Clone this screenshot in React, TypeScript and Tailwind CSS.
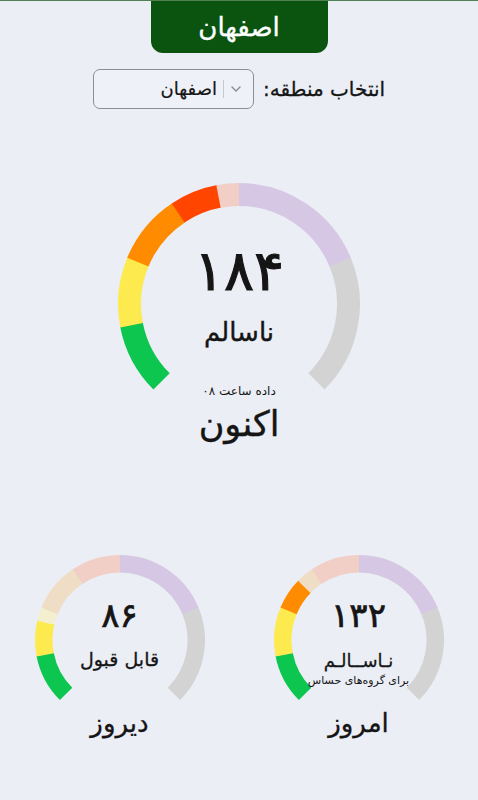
import React from "react";

type Seg = { min: number; max: number; units: number; full: string; faded: string };

const SEGS: Seg[] = [
  { min: 0, max: 50, units: 1, full: "#0cc64f", faded: "#cfeed8" },
  { min: 50, max: 100, units: 1, full: "#fdea4f", faded: "#f3efcf" },
  { min: 100, max: 150, units: 1, full: "#ff8c00", faded: "#f0ddc6" },
  { min: 150, max: 200, units: 1, full: "#ff4500", faded: "#f1cfc7" },
  { min: 200, max: 300, units: 2, full: "#8f3f97", faded: "#d6c8e4" },
  { min: 300, max: 500, units: 2, full: "#7e0023", faded: "#d3d3d3" },
];

function arcPath(cx: number, cy: number, r: number, a1: number, a2: number) {
  const rad = (d: number) => (d * Math.PI) / 180;
  const x1 = cx + r * Math.cos(rad(a1));
  const y1 = cy + r * Math.sin(rad(a1));
  const x2 = cx + r * Math.cos(rad(a2));
  const y2 = cy + r * Math.sin(rad(a2));
  const large = a2 - a1 > 180 ? 1 : 0;
  return `M ${x1.toFixed(2)} ${y1.toFixed(2)} A ${r} ${r} 0 ${large} 1 ${x2.toFixed(2)} ${y2.toFixed(2)}`;
}

function GaugeArc({
  value,
  outer,
  stroke,
  width,
  height,
}: {
  value: number;
  outer: number;
  stroke: number;
  width: number;
  height: number;
}) {
  const cx = width / 2;
  const cy = width / 2;
  const r = outer - stroke / 2;
  const unit = 270 / 8;
  const parts: { a1: number; a2: number; color: string }[] = [];
  let a = 135;
  for (const s of SEGS) {
    const start = a;
    const end = a + s.units * unit;
    if (value >= s.max) {
      parts.push({ a1: start, a2: end, color: s.full });
    } else if (value >= s.min) {
      const mid = start + ((value - s.min) / (s.max - s.min)) * (end - start);
      parts.push({ a1: start, a2: mid, color: s.full });
      parts.push({ a1: mid, a2: end, color: s.faded });
    } else {
      parts.push({ a1: start, a2: end, color: s.faded });
    }
    a = end;
  }
  return (
    <svg width={width} height={height} viewBox={`0 0 ${width} ${height}`}>
      {parts.map((p, i) => (
        <path
          key={i}
          d={arcPath(cx, cy, r, p.a1, Math.min(p.a2 + (i < parts.length - 1 ? 0.4 : 0), 405))}
          fill="none"
          stroke={p.color}
          strokeWidth={stroke}
          strokeLinecap="butt"
        />
      ))}
    </svg>
  );
}

export default function App() {
  return (
    <div
      dir="rtl"
      className="min-h-[800px] w-full bg-[#ebeef5] border-t border-[#4f8050] text-[#151515] font-['DejaVu_Sans',sans-serif]"
    >
      {/* header tab */}
      <div className="mx-auto flex h-[52px] w-[177px] items-center justify-center rounded-b-[12px] bg-[#0b5410]">
        <span className="text-[26px] leading-none text-white [-webkit-text-stroke:0.4px_#ffffff]">اصفهان</span>
      </div>

      {/* region select */}
      <div className="mt-[16px] flex items-center justify-center gap-[9px]">
        <span className="text-[20px] leading-none [-webkit-text-stroke:0.3px_#151515]">انتخاب منطقه:</span>
        <div className="flex h-[40px] w-[161px] items-center rounded-[7px] border border-[#8e8e8e] bg-[#eef1f7] pr-[11px]">
          <svg width="12" height="8" viewBox="0 0 12 8" className="ml-[6px]">
            <path d="M2 2 L6 6 L10 2" fill="none" stroke="#8a8a8a" strokeWidth="1.4" strokeLinecap="round" strokeLinejoin="round" />
          </svg>
          <span className="ml-[6px] h-[18px] w-px bg-[#c8c8c8]" />
          <span className="text-[18px] leading-none [-webkit-text-stroke:0.2px_#151515]">اصفهان</span>
        </div>
      </div>

      {/* main gauge */}
      <div className="mt-[70px] flex flex-col items-center">
        <div className="grid">
          <div className="[grid-area:1/1]">
            <GaugeArc value={184} outer={121} stroke={23} width={250} height={214} />
          </div>
          <div className="[grid-area:1/1] flex flex-col items-center pt-[64px]">
            <span className="text-[56px] leading-none tracking-[0.14em] [-webkit-text-stroke:1.1px_#151515]">۱۸۴</span>
            <span className="mt-[20px] text-[26px] leading-none [-webkit-text-stroke:0.4px_#151515]">ناسالم</span>
            <span className="mt-[40px] text-[12px] leading-none">داده ساعت ۰۸</span>
          </div>
        </div>
        <span className="mt-[10px] text-[35px] leading-none [-webkit-text-stroke:0.4px_#151515]">اکنون</span>
      </div>

      {/* small gauges */}
      <div className="mt-[110px] grid grid-cols-2">
        <div className="flex flex-col items-center">
          <div className="grid">
            <div className="[grid-area:1/1]">
              <GaugeArc value={132} outer={85} stroke={17.5} width={176} height={152} />
            </div>
            <div className="[grid-area:1/1] flex flex-col items-center pt-[46px]">
              <span className="text-[34px] leading-none tracking-[0.14em] [-webkit-text-stroke:0.7px_#151515]">۱۳۲</span>
              <span className="mt-[20px] text-[18px] leading-none [-webkit-text-stroke:0.3px_#151515]">نـاســالـم</span>
              <span className="mt-[5px] text-[11px] leading-none">برای گروه‌های حساس</span>
            </div>
          </div>
          <span className="mt-[6px] text-[26px] leading-none [-webkit-text-stroke:0.3px_#151515]">امروز</span>
        </div>
        <div className="flex flex-col items-center">
          <div className="grid">
            <div className="[grid-area:1/1]">
              <GaugeArc value={86} outer={85} stroke={17.5} width={176} height={152} />
            </div>
            <div className="[grid-area:1/1] flex flex-col items-center pt-[46px]">
              <span className="text-[34px] leading-none tracking-[0.14em] [-webkit-text-stroke:0.7px_#151515]">۸۶</span>
              <span className="mt-[18px] text-[19px] leading-none [-webkit-text-stroke:0.3px_#151515]">قابل قبول</span>
            </div>
          </div>
          <span className="mt-[6px] text-[26px] leading-none [-webkit-text-stroke:0.3px_#151515]">دیروز</span>
        </div>
      </div>
    </div>
  );
}
